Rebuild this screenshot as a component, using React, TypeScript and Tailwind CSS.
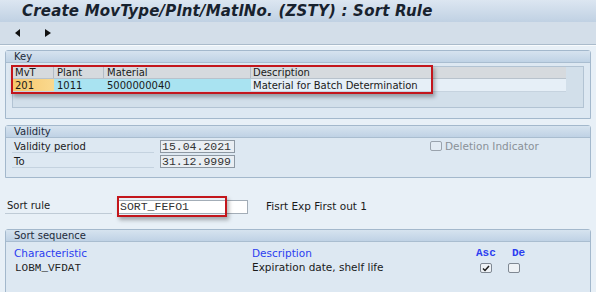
import React from 'react';

const sans = "font-['DejaVu_Sans','Liberation_Sans',sans-serif]";
const mono = "font-['Liberation_Mono','DejaVu_Sans_Mono',monospace]";

const Group: React.FC<{ title: string; className?: string; children: React.ReactNode }> = ({ title, className = '', children }) => (
  <div className={`mx-[5px] border border-[#a3b8cc] rounded-t-[3px] bg-[#dde8f2] ${className}`}>
    <div className="h-[12px] bg-gradient-to-b from-[#d6e3ef] to-[#bfd2e5] border-b border-[#a9bdd0] pl-[8px] text-[10px] leading-[12px] text-[#1d2b3a]">
      {title}
    </div>
    {children}
  </div>
);

const CheckBox: React.FC<{ checked?: boolean; disabled?: boolean }> = ({ checked, disabled }) => (
  <div
    className={`w-[12px] h-[10px] rounded-[2px] border flex items-center justify-center ${
      disabled ? 'border-[#9aa3ad] bg-[#e3ebf3]' : 'border-[#7f8893] bg-[#eef2f6]'
    }`}
  >
    {checked && (
      <svg width="8" height="7" viewBox="0 0 8 7">
        <path d="M1 3.5 L3 5.5 L7 1" stroke="#1c1c1c" strokeWidth="1.5" fill="none" />
      </svg>
    )}
  </div>
);

const App: React.FC = () => {
  return (
    <div className={`w-[596px] h-[292px] overflow-hidden bg-[#e8f0f7] ${sans} text-[10px] text-[#1a1a1a]`}>
      {/* Title */}
      <div className="h-[22px] bg-gradient-to-b from-[#dce6f1] to-[#c0d1e3] pl-[22px] flex items-center">
        <span className="text-[15px] font-bold italic text-[#18222e] tracking-[0.2px]">
          Create MovType/Plnt/MatlNo. (ZSTY) : Sort Rule
        </span>
      </div>

      {/* Toolbar */}
      <div className="h-[23px] bg-[#d3dee9] border-b border-[#aabbcb] flex items-center gap-[24px] pl-[15px]">
        <svg width="6" height="8" viewBox="0 0 6 8">
          <path d="M5 0 L0 4 L5 8 Z" fill="#111" />
        </svg>
        <svg width="6" height="8" viewBox="0 0 6 8">
          <path d="M0 0 L6 4 L0 8 Z" fill="#111" />
        </svg>
      </div>
      <div className="h-[5px] border-t border-white/70" />

      {/* Key */}
      <Group title="Key" className="h-[69px]">
        <div className="relative mt-[3px] ml-[6px] mr-[6px] h-[42px] bg-[#d2dfea] border border-[#b2c3d3]">
          <div className="flex h-[12px] w-[553px] bg-[#d6dade] border-b border-[#b8c2cc] text-[#1a1a1a] leading-[12px]">
            <div className="w-[41px] pl-[2px] border-r border-[#b3bcc6]">MvT</div>
            <div className="w-[50px] pl-[3px] border-r border-[#b3bcc6]">Plant</div>
            <div className="w-[147px] pl-[3px] border-r border-[#b3bcc6]">Material</div>
            <div className="flex-1 pl-[2px]">Description</div>
          </div>
          <div className="flex h-[13px] w-[553px] leading-[13px] border-b border-[#c6d3df]">
            <div className="w-[41px] pl-[2px] bg-gradient-to-r from-[#f6c76b] to-[#fad98f]">201</div>
            <div className="w-[50px] pl-[3px] bg-[#a9e3f1]">1011</div>
            <div className="w-[147px] pl-[3px] bg-[#a9e3f1]">5000000040</div>
            <div className="flex-1 pl-[2px] bg-[#e6eff7]">Material for Batch Determination</div>
          </div>
          <div className="absolute left-[-2px] top-[-2px] w-[422px] h-[29px] border-2 border-[#c3161c] shadow-[2px_3px_4px_rgba(0,0,0,0.3)]" />
        </div>
      </Group>

      {/* Validity */}
      <Group title="Validity" className="mt-[6px] h-[53px]">
        <div className="flex mt-[2px]">
          <div className="ml-[6px] w-[142px] flex flex-col gap-[2px]">
            <div className="h-[13px] leading-[13px] pl-[2px] border-b border-[#c4d2df]">Validity period</div>
            <div className="h-[13px] leading-[13px] pl-[2px] border-b border-[#c4d2df]">To</div>
          </div>
          <div className="ml-[6px] flex flex-col gap-[2px]">
            <div className={`w-[75px] h-[13px] border border-[#8d98a3] bg-[#e9eef3] ${mono} text-[11.5px] leading-[11px] pl-[1px] text-[#333]`}>15.04.2021</div>
            <div className={`w-[75px] h-[13px] border border-[#8d98a3] bg-[#e9eef3] ${mono} text-[11.5px] leading-[11px] pl-[1px] text-[#333]`}>31.12.9999</div>
          </div>
          <div className="ml-[195px] mt-[1px] flex items-start gap-[3px] text-[#8a9198]">
            <CheckBox disabled />
            <span className="leading-[10px] text-[10.5px]">Deletion Indicator</span>
          </div>
        </div>
      </Group>

      {/* Sort rule */}
      <div className="flex items-center mt-[21px] h-[15px]">
        <div className="ml-[5px] w-[107px] h-[15px] leading-[14px] pl-[2px] border-b border-[#bfcbd6]">Sort rule</div>
        <div className="relative ml-[5px]">
          <div className={`w-[131px] h-[14px] bg-white border border-[#a3adb7] ${mono} text-[11.5px] leading-[12px] pl-[2px] text-[#333]`}>
            SORT_FEFO1
          </div>
          <div className="absolute left-[0px] top-[-4px] w-[110px] h-[21px] border-2 border-[#c3161c] shadow-[2px_3px_4px_rgba(0,0,0,0.3)]" />
        </div>
        <span className="ml-[18px] text-[10.5px]">Fisrt Exp First out 1</span>
      </div>

      {/* Sort sequence */}
      <Group title="Sort sequence" className="mt-[15px] h-[80px]">
        <div className="flex mt-[5px] h-[12px] leading-[12px] text-[#2b3df0] text-[10.5px]">
          <div className="ml-[8px] w-[238px]">Characteristic</div>
          <div className="w-[224px]">Description</div>
          <div className={`w-[36px] ${mono} text-[11px] font-bold`}>Asc</div>
          <div className={`${mono} text-[11px] font-bold`}>De</div>
        </div>
        <div className="flex mt-[3px] h-[12px] items-center">
          <div className={`ml-[9px] w-[237px] ${mono} text-[11px] text-[#222]`}>LOBM_VFDAT</div>
          <div className="w-[228px] text-[10.5px]">Expiration date, shelf life</div>
          <div className="w-[28px]"><CheckBox checked /></div>
          <CheckBox />
        </div>
      </Group>
    </div>
  );
};

export default App;
